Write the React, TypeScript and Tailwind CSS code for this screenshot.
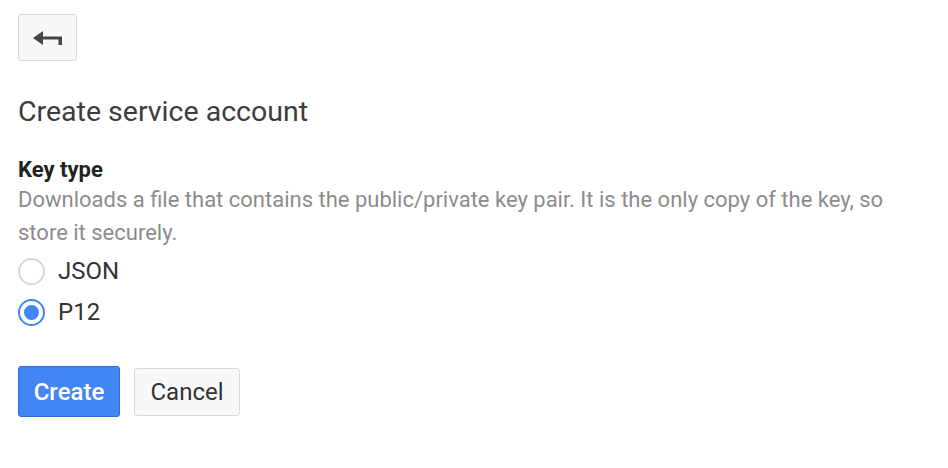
export default function App() {
  return (
    <div className="min-h-[468px] w-full bg-white px-[18px] pt-[14px] font-['Roboto',_'Liberation_Sans',_sans-serif]">
      <button className="flex h-[47px] w-[59px] items-center justify-center rounded-[3px] border border-[#d9d9d9] bg-[#f8f8f8]">
        <svg width="29" height="16" viewBox="0 0 29 16">
          <path d="M0 8 L10 1 V6.5 H29 V15 H25.5 V9.5 H10 V15 Z" fill="#444" />
        </svg>
      </button>
      <h1 className="mt-[34px] text-[28.5px] leading-[34px] text-[#3c3c3c]">Create service account</h1>
      <div className="mt-[28px] text-[22px] font-bold leading-[26px] text-[#222]">Key type</div>
      <p className="w-[905px] text-[22px] leading-[33px] text-[#8c8c8c]">
        Downloads a file that contains the public/private key pair. It is the only copy of the key, so store it securely.
      </p>
      <div className="mt-[8px] flex flex-col gap-[13px]">
        <label className="flex h-[28px] items-center gap-[13px] text-[24px] text-[#333]">
          <span className="h-[27px] w-[27px] rounded-full border-2 border-[#d6d6d6] bg-white" />
          JSON
        </label>
        <label className="flex h-[28px] items-center gap-[13px] text-[24px] text-[#333]">
          <span className="flex h-[27px] w-[27px] items-center justify-center rounded-full border-2 border-[#4285f4] bg-white">
            <span className="h-[15px] w-[15px] rounded-full bg-[#4285f4]" />
          </span>
          P12
        </label>
      </div>
      <div className="mt-[40px] flex items-center gap-[14px]">
        <button className="h-[51px] w-[102px] rounded-[3px] border border-[#2f6bd6] bg-[#4285f4] text-[24px] font-medium text-white">
          Create
        </button>
        <button className="h-[48px] w-[106px] rounded-[3px] border border-[#d9d9d9] bg-[#f8f8f8] text-[24px] text-[#333]">
          Cancel
        </button>
      </div>
    </div>
  );
}
